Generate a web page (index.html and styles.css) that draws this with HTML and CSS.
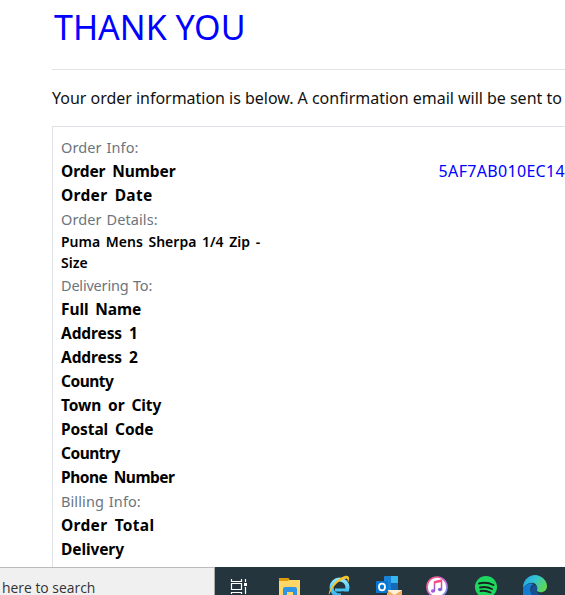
FILE: index.html
```html
<!DOCTYPE html>
<html lang="en">
<head>
<meta charset="utf-8">
<title>Thank you</title>
<link rel="stylesheet" href="styles.css">
</head>
<body>
<main class="page">
  <h1>THANK YOU</h1>
  <hr>
  <p class="intro">Your order information is below. A confirmation email will be sent to</p>
  <section class="order">
    <div class="label">Order Info:</div>
    <div class="row"><b>Order Number</b><span class="value">5AF7AB010EC14</span></div>
    <div class="row"><b class="wide">Order Date</b></div>
    <div class="label">Order Details:</div>
    <div class="item">Puma Mens Sherpa 1/4 Zip -<br>Size</div>
    <div class="label">Delivering To:</div>
    <div class="row"><b>Full Name</b></div>
    <div class="row"><b>Address 1</b></div>
    <div class="row"><b>Address 2</b></div>
    <div class="row"><b class="narrow">County</b></div>
    <div class="row"><b>Town or City</b></div>
    <div class="row"><b>Postal Code</b></div>
    <div class="row"><b class="narrow">Country</b></div>
    <div class="row"><b class="narrow">Phone Number</b></div>
    <div class="label">Billing Info:</div>
    <div class="row"><b class="wide">Order Total</b></div>
    <div class="row"><b>Delivery</b></div>
    <div class="row"><b>Grand Total</b></div>
  </section>
</main>
<footer class="taskbar">
  <div class="search">here to search</div>
  <svg class="icons" width="350" height="28" viewBox="215 567 350 28">
    <defs>
      <linearGradient id="ie" x1="0" y1="0" x2="0" y2="1"><stop offset="0" stop-color="#8ee6ff"/><stop offset="1" stop-color="#2fb5ee"/></linearGradient>
      <linearGradient id="ring" x1="0" y1="0" x2="1" y2="1"><stop offset="0" stop-color="#ff5b73"/><stop offset=".5" stop-color="#d665d8"/><stop offset="1" stop-color="#5aa9f5"/></linearGradient>
      <linearGradient id="note" x1="0" y1="0" x2="0" y2="1"><stop offset="0" stop-color="#fa4b78"/><stop offset="1" stop-color="#7064e8"/></linearGradient>
      <linearGradient id="edge" x1="0" y1="0" x2="1" y2=".5"><stop offset="0" stop-color="#1f9de5"/><stop offset=".5" stop-color="#32c5d3"/><stop offset="1" stop-color="#5fd657"/></linearGradient>
    </defs>
    <g fill="none" stroke="#fff" stroke-width="1.2">
      <path d="M231.500 579v2.500h10V579M231.500 594v-1.500h10v1.500M231.500 583.500h10v6h-10zM245.500 579v3M245.500 587v7"/>
      <path d="M244 583h3v3h-3z" fill="#fff" stroke="none"/>
    </g>
    <path d="M279 578h9l1.500 2H300v15h-21z" fill="#ffd766"/>
    <path d="M279 578h9l1.500 1-1.500 2h-9z" fill="#dc9a0c"/>
    <path d="M283 595v-6q0-2 2-2h10q2 0 2 2v6h-4v-3h-6v3z" fill="#3094e6"/>
    <circle cx="339.500" cy="587.500" r="8" fill="none" stroke="url(#ie)" stroke-width="4"/>
    <path d="M335 588.500h14v3h-14z" fill="#45c4f3"/>
    <path d="M341 591.500h9v3.500h-9z" fill="#25353e"/>
    <path d="M329 595c-1-6 8-17 16-19 5-1 5 3 2.500 8 1-5 0-6-3-5-7 2-13 9-15.500 16z" fill="#f6c52c"/>
    <path d="M384 577q0-1 1-1h12q1 0 1 1v14h-14z" fill="#1683d8"/>
    <path d="M391 576h6q1 0 1 1v6h-7z" fill="#38b6ed"/><path d="M391 583h7v7h-7z" fill="#1769b5"/>
    <path d="M387 590h15v5h-15z" fill="#f1ad60"/><path d="m387 590 7.500 5 7.500-5z" fill="#fff0d8"/>
    <path d="M377 581h10q1 0 1 1v11h-12v-11q0-1 1-1z" fill="#0877d2"/>
    <ellipse cx="382" cy="587" rx="3" ry="3.300" fill="none" stroke="#fff" stroke-width="1.800"/>
    <circle cx="437" cy="587" r="10" fill="#fff" stroke="url(#ring)" stroke-width="1.600"/>
    <path d="M434.500 591v-9l7-1.500v9" fill="none" stroke="url(#note)" stroke-width="1.500"/>
    <path d="m434.500 581 7-1.500v2.500l-7 1.500z" fill="#f54b83"/>
    <ellipse cx="433" cy="591" rx="2.100" ry="1.800" fill="#a25bd5"/><ellipse cx="440" cy="589.500" rx="2.100" ry="1.800" fill="#8660df"/>
    <circle cx="486" cy="587" r="11" fill="#1ed760"/>
    <path d="M479 583.500q7.500-2 14.500 1.500M480 587.500q6-1.500 12 1.500M480.500 591q5-1 10 1.500" fill="none" stroke="#17231f" stroke-width="1.900" stroke-linecap="round"/>
    <path d="M523 588c0-8 6-13 12-13s12 5 12 11c0 5-4 7-8 6-3-1-2-2-2-4 0-7-9-7-14 0z" fill="url(#edge)"/>
    <path d="M523 595v-6c2-5 7-7 11-5-5 2-4 8-2 11z" fill="#137bd1"/>
    <path d="M532 595c-2-4-1-8 2-10 3 0 4 3 3 5-1 3 3 5 7 5z" fill="#164f94"/>
  </svg>
</footer>
</body>
</html>
```

FILE: styles.css
```css
* { box-sizing: border-box; }
body {
  margin: 0;
  height: 595px;
  overflow: hidden;
  background: #fff;
  color: #000;
  font: 16px/24px "Comic Sans MS", "Noto Sans", sans-serif;
  display: flex;
  flex-direction: column;
}
.page { flex: 1; min-height: 0; overflow: hidden; padding: 6px 0 0 52px; white-space: nowrap; }
h1 { margin: 0; height: 43px; padding-left: 2px; font-size: 34px; line-height: 43px; font-weight: 400; color: #00f; }
hr { margin: 20px 0 16px; border: 0; border-top: 1px solid #e3e3e3; }
.intro { margin: 0 0 16px; height: 24px; color: #111; letter-spacing: -.02px; }
.order { width: 620px; border: 1px solid #dee2e6; padding: 8px; }
.label { font-size: 14.500px; color: #6c757d; letter-spacing: .1px; word-spacing: 1px; }
.label:nth-of-type(6) { letter-spacing: -.2px; }
.row { display: flex; height: 24px; }
.value { margin-left: auto; margin-right: 98px; color: #00f; letter-spacing: .32px; }
.row b { font-size: 15.500px; font-weight: 700; word-spacing: 3px; letter-spacing: -.1px; }
.row .wide { letter-spacing: .3px; }
.row .narrow { letter-spacing: -.5px; }
.item { font-size: 14px; line-height: 21px; font-weight: 600; word-spacing: 2px; }
.taskbar { height: 28px; display: flex; background: #25353e; }
.search {
  width: 215px;
  padding: 8px 0 0 2px;
  background: #f0f0f0;
  border-top: 1px solid #bcbcbc;
  border-right: 1px solid #aaa;
  color: #333;
  font: 13.900px/24px "Open Sans", sans-serif;
}
.icons { display: block; }
```
